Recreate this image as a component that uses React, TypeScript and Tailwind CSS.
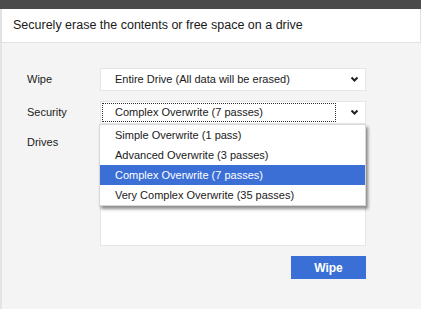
import React from 'react';

const options = [
  'Simple Overwrite (1 pass)',
  'Advanced Overwrite (3 passes)',
  'Complex Overwrite (7 passes)',
  'Very Complex Overwrite (35 passes)',
];

function Chevron() {
  return (
    <svg width="9" height="7" viewBox="0 0 9 7" className="shrink-0">
      <polyline points="1.5,1.5 4.5,4.5 7.5,1.5" fill="none" stroke="#222" strokeWidth="2" />
    </svg>
  );
}

export default function App() {
  const selected = 2;

  return (
    <div
      className="w-[421px] h-[309px] flex flex-col bg-[#f4f4f4] text-[#1a1a1a] overflow-hidden"
      style={{ fontFamily: '"Liberation Sans", Arial, sans-serif' }}
    >
      <div className="h-[9px] bg-[#4b4b4b] shrink-0" />
      <div className="h-[34px] shrink-0 bg-white border-l-2 border-r border-b border-[#e2e2e2] flex items-center pl-[11px] text-[12.5px]">
        Securely erase the contents or free space on a drive
      </div>

      <div className="flex-1 border-l-2 border-[#e4e4e4] pl-[25px] pr-[55px] pt-[25px] flex flex-col text-[11px]">
        <div className="flex items-center h-[23px]">
          <div className="w-[73px]">Wipe</div>
          <div className="flex-1 h-full bg-white border border-[#e6e6e6] flex items-center pl-[14px] pr-[6px]">
            <span className="flex-1">Entire Drive (All data will be erased)</span>
            <Chevron />
          </div>
        </div>

        <div className="flex items-center h-[23px] mt-[10px]">
          <div className="w-[73px]">Security</div>
          <div className="flex-1 h-full relative bg-white border border-[#e6e6e6] flex items-center pr-[6px]">
            <div className="flex-1 self-stretch m-[1px] mr-[14px] border border-dotted border-[#333] flex items-center pl-[12px]">
              Complex Overwrite (7 passes)
            </div>
            <Chevron />
            <div className="absolute left-[-2px] right-[-1px] top-[22px] z-10 bg-white border border-[#d8d8d8] shadow-[2px_3px_3px_rgba(0,0,0,0.45)]">
              {options.map((o, i) => (
                <div
                  key={o}
                  className={
                    'h-[20px] flex items-center pl-[15px] ' +
                    (i === selected ? 'bg-[#3b6fd6] text-white' : '')
                  }
                >
                  {o}
                </div>
              ))}
            </div>
          </div>
        </div>

        <div className="flex mt-[10px]">
          <div className="w-[73px]">Drives</div>
          <div className="flex-1 h-[112px] bg-white border border-[#e6e6e6]" />
        </div>

        <div className="flex justify-end mt-[10px]">
          <button className="w-[75px] h-[23px] bg-[#3a6fd6] text-white font-bold text-[12px]">
            Wipe
          </button>
        </div>
      </div>
    </div>
  );
}
